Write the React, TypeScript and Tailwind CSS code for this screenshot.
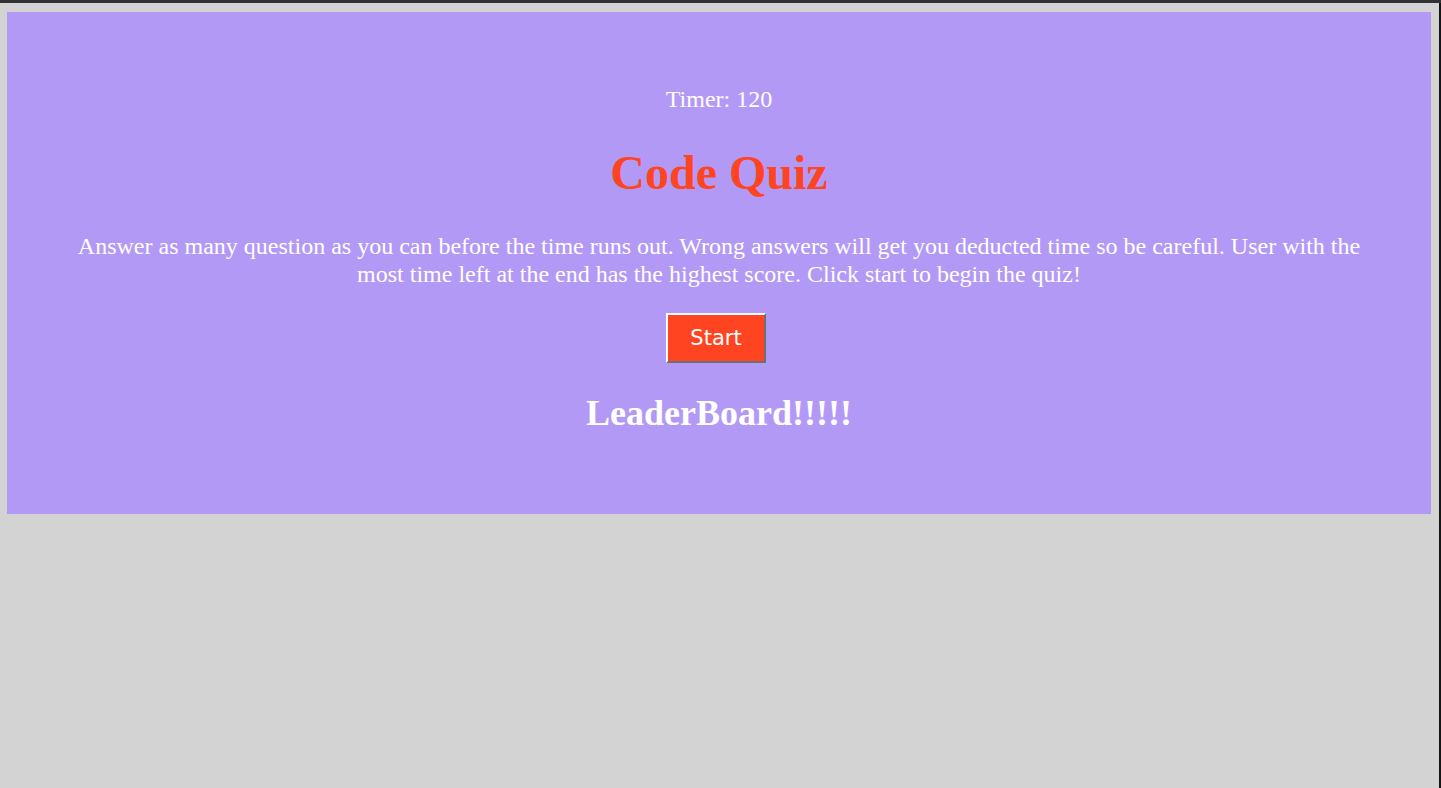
import * as React from "react";

const serif = "font-['Liberation_Serif','Times_New_Roman',serif]";

function StartButton() {
  return (
    <button
      type="button"
      className="h-[50px] w-[100px] border-2 border-t-white border-l-white border-r-[#6f6f6f] border-b-[#6f6f6f] bg-[#ff4421] text-[21px] leading-none text-white font-['DejaVu_Sans','Verdana',sans-serif]"
    >
      Start
    </button>
  );
}

export default function App() {
  return (
    <div className="flex h-screen min-h-[788px] flex-col bg-[#d3d3d3]">
      <div className="h-[3px] bg-[#323232]" />
      <div className="flex flex-1">
        <main className="flex-1 pl-[7px] pr-[8px] pt-[9px]">
          <section
            className={`flex h-[502px] flex-col items-center bg-[#b399f6] px-[60px] pt-[73px] text-center text-white ${serif}`}
          >
            <p className="text-[24px] leading-[28px]">Timer: 120</p>
            <h1 className="mt-[32px] text-[48px] font-bold leading-[56px] text-[#ff4421]">
              Code Quiz
            </h1>
            <p className="mt-[31px] text-[24px] leading-[28px]">
              Answer as many question as you can before the time runs out.
              Wrong answers will get you deducted time so be careful. User with
              the most time left at the end has the highest score. Click start
              to begin the quiz!
            </p>
            <div className="mt-[25px] mr-[6px]">
              <StartButton />
            </div>
            <h2 className="mt-[29px] text-[36px] font-bold leading-[42px]">
              LeaderBoard!!!!!
            </h2>
          </section>
        </main>
        <div className="w-[2px] bg-[#151515]" />
      </div>
    </div>
  );
}
